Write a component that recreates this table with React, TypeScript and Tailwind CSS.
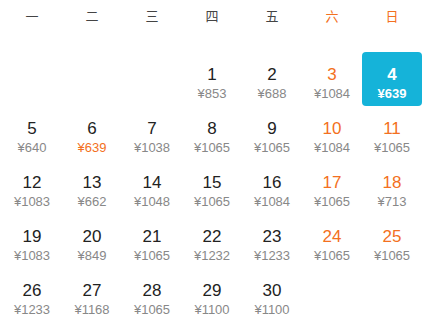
const WEEK = ["一", "二", "三", "四", "五", "六", "日"];

type Day = { d: number; price: number; low?: boolean };

const DAYS: (Day | null)[] = [
  null, null, null,
  { d: 1, price: 853 }, { d: 2, price: 688 }, { d: 3, price: 1084 }, { d: 4, price: 639 },
  { d: 5, price: 640 }, { d: 6, price: 639, low: true }, { d: 7, price: 1038 }, { d: 8, price: 1065 },
  { d: 9, price: 1065 }, { d: 10, price: 1084 }, { d: 11, price: 1065 },
  { d: 12, price: 1083 }, { d: 13, price: 662 }, { d: 14, price: 1048 }, { d: 15, price: 1065 },
  { d: 16, price: 1084 }, { d: 17, price: 1065 }, { d: 18, price: 713 },
  { d: 19, price: 1083 }, { d: 20, price: 849 }, { d: 21, price: 1065 }, { d: 22, price: 1232 },
  { d: 23, price: 1233 }, { d: 24, price: 1065 }, { d: 25, price: 1065 },
  { d: 26, price: 1233 }, { d: 27, price: 1168 }, { d: 28, price: 1065 }, { d: 29, price: 1100 },
  { d: 30, price: 1100 },
];

const SELECTED = 4;

export default function App() {
  return (
    <div className="w-[433px] h-[333px] bg-white pl-[2px] font-['Liberation_Sans','Noto_Sans_CJK_SC',sans-serif]">
      <div className="grid grid-cols-[repeat(7,60px)]">
        {WEEK.map((w, i) => (
          <div
            key={w}
            className={`h-[52px] pt-[9px] text-center text-[13px] leading-[16px] ${i >= 5 ? "text-[#f37021]" : "text-[#444]"}`}
          >
            {w}
          </div>
        ))}

        {DAYS.map((day, i) => {
          if (!day) return <div key={`e${i}`} className="h-[54px]" />;
          const weekend = i % 7 >= 5;
          const selected = day.d === SELECTED;
          return (
            <div
              key={day.d}
              className={`h-[54px] flex flex-col items-center pt-[12px] ${selected ? "bg-[#15b3d9] rounded-[4px]" : ""}`}
            >
              <span
                className={`text-[17px] leading-[22px] ${selected ? "text-white font-semibold" : weekend ? "text-[#f37021]" : "text-[#222]"}`}
              >
                {day.d}
              </span>
              <span
                className={`text-[13px] leading-[16px] ${selected ? "text-white font-semibold" : day.low ? "text-[#f37021]" : "text-[#888]"}`}
              >
                ¥{day.price}
              </span>
            </div>
          );
        })}
      </div>
    </div>
  );
}
